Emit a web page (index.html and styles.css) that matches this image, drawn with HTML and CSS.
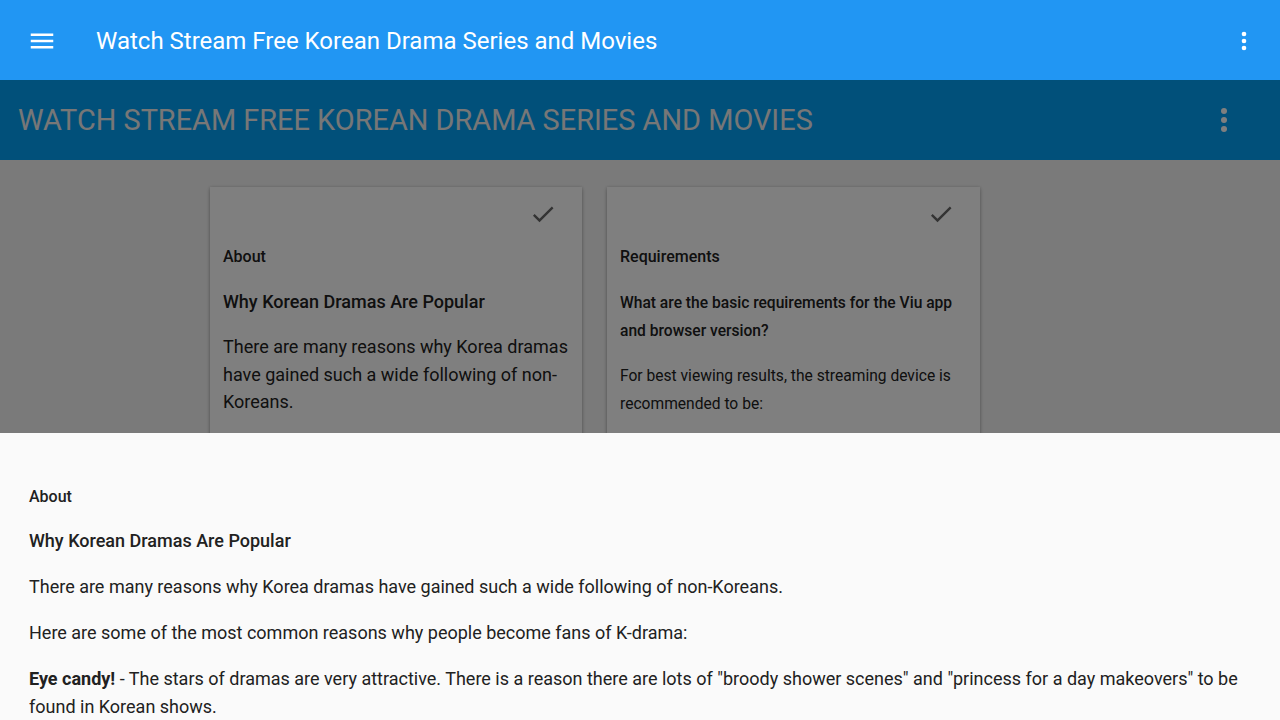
FILE: index.html
```html
<!DOCTYPE html>
<html>
<head>
<meta charset="utf-8">
<link rel="stylesheet" href="styles.css">
</head>
<body>
<div class="app">
  <header class="topbar">
    <svg class="menu-icon" viewBox="0 0 24 24"><path d="M3 18h18v-2H3v2zm0-5h18v-2H3v2zm0-7v2h18V6H3z" fill="#fff"/></svg>
    <div class="top-title">Watch Stream Free Korean Drama Series and Movies</div>
    <svg class="kebab" viewBox="0 0 24 24"><circle cx="12" cy="6" r="2" fill="#fff"/><circle cx="12" cy="12" r="2" fill="#fff"/><circle cx="12" cy="18" r="2" fill="#fff"/></svg>
  </header>
  <div class="under">
    <div class="subbar">
      <div class="sub-title">Watch Stream Free Korean Drama Series and Movies</div>
      <svg class="kebab2" viewBox="0 0 24 24"><circle cx="12" cy="6" r="2" fill="#fff"/><circle cx="12" cy="12" r="2" fill="#fff"/><circle cx="12" cy="18" r="2" fill="#fff"/></svg>
    </div>
    <main class="content">
      <section class="card">
        <div class="card-top"><svg class="check" viewBox="0 0 24 24"><path d="M9 16.17L4.83 12l-1.42 1.41L9 19 21 7l-1.41-1.41z" fill="#666"/></svg></div>
        <div class="label">About</div>
        <h3 class="card-h big">Why Korean Dramas Are Popular</h3>
        <p class="card-p big">There are many reasons why Korea dramas have gained such a wide following of non-Koreans.</p>
        <p class="card-p big">Here are some of the most common reasons why people become fans of K-drama:</p>
      </section>
      <section class="card">
        <div class="card-top"><svg class="check" viewBox="0 0 24 24"><path d="M9 16.17L4.83 12l-1.42 1.41L9 19 21 7l-1.41-1.41z" fill="#666"/></svg></div>
        <div class="label">Requirements</div>
        <h3 class="card-h small">What are the basic requirements for the Viu app and browser version?</h3>
        <p class="card-p small">For best viewing results, the streaming device is recommended to be:</p>
        <p class="card-p small">Android 4.1 and above, iOS 9 and above.</p>
      </section>
    </main>
    <div class="scrim"></div>
  </div>
  <div class="sheet">
    <div class="label">About</div>
    <h3 class="sheet-h">Why Korean Dramas Are Popular</h3>
    <p class="sheet-p">There are many reasons why Korea dramas have gained such a wide following of non-Koreans.</p>
    <p class="sheet-p">Here are some of the most common reasons why people become fans of K-drama:</p>
    <p class="sheet-p"><b>Eye candy!</b> - The stars of dramas are very attractive. There is a reason there are lots of "broody shower scenes" and "princess for a day makeovers" to be found in Korean shows.</p>
  </div>
</div>
</body>
</html>
```
FILE: styles.css
```css
* { box-sizing: border-box; }
html, body { margin: 0; padding: 0; }
body {
  width: 1280px;
  height: 720px;
  overflow: hidden;
  font-family: Roboto, "Liberation Sans", sans-serif;
  color: #212121;
  background: #f5f5f5;
}
.app {
  position: relative;
  width: 1280px;
  height: 720px;
  overflow: hidden;
}
.topbar {
  height: 80px;
  background: #2196f3;
  display: flex;
  align-items: center;
  padding-left: 27px;
  padding-right: 22px;
  padding-top: 1px;
  position: relative;
  z-index: 3;
}
.menu-icon { width: 30px; height: 30px; display: block; }
.top-title {
  margin-left: 39px;
  color: #fff;
  font-size: 24px;
  flex: 1;
}
.kebab { width: 28px; height: 28px; display: block; }
.under {
  position: relative;
  height: 640px;
}
.subbar {
  height: 80px;
  background: #03a1f4;
  display: flex;
  align-items: center;
  padding-left: 18px;
  padding-right: 38px;
}
.sub-title {
  flex: 1;
  color: #eeeeee;
  font-size: 28.9px;
  text-transform: uppercase;
}
.kebab2 { width: 36px; height: 36px; display: block; }
.content {
  display: flex;
  gap: 25px;
  padding: 27px 0 0 210px;
  align-items: flex-start;
}
.card {
  width: 372px;
  height: 400px;
  background: #fff;
  padding: 13px 8px 0 13px;
  box-shadow: 0 2px 4px rgba(0,0,0,0.25), 0 0 3px rgba(0,0,0,0.15);
  overflow: hidden;
}
.card + .card { width: 373px; }
.card-top {
  display: flex;
  justify-content: flex-end;
  padding-right: 17px;
}
.check { width: 28px; height: 28px; display: block; }
.label {
  font-size: 16px;
  line-height: 24px;
  font-weight: 500;
  margin-top: 17px;
}
.card-h {
  margin: 19px 0 0 0;
  font-weight: 500;
}
.card-h.big { font-size: 18px; line-height: 28px; }
.card-h.small { font-size: 15.6px; line-height: 28px; margin-top: 20px; }
.card-p { margin: 17px 0 0 0; font-weight: 400; }
.card-p.big { font-size: 18px; line-height: 27.5px; }
.card-p.small { font-size: 15.6px; line-height: 28px; margin-top: 17px; }
.scrim {
  position: absolute;
  inset: 0;
  background: rgba(0,0,0,0.5);
}
.sheet {
  position: absolute;
  left: 0;
  right: 0;
  bottom: 0;
  height: 287px;
  background: #fafafa;
  padding: 36px 29px 0 29px;
  z-index: 4;
}
.sheet .label { margin-top: 16px; }
.sheet-h {
  margin: 18px 0 0 0;
  font-size: 18px;
  line-height: 28px;
  font-weight: 500;
}
.sheet-p {
  margin: 18px 0 0 0;
  font-size: 18px;
  line-height: 28px;
}
.sheet-p b { font-weight: 700; }
```
